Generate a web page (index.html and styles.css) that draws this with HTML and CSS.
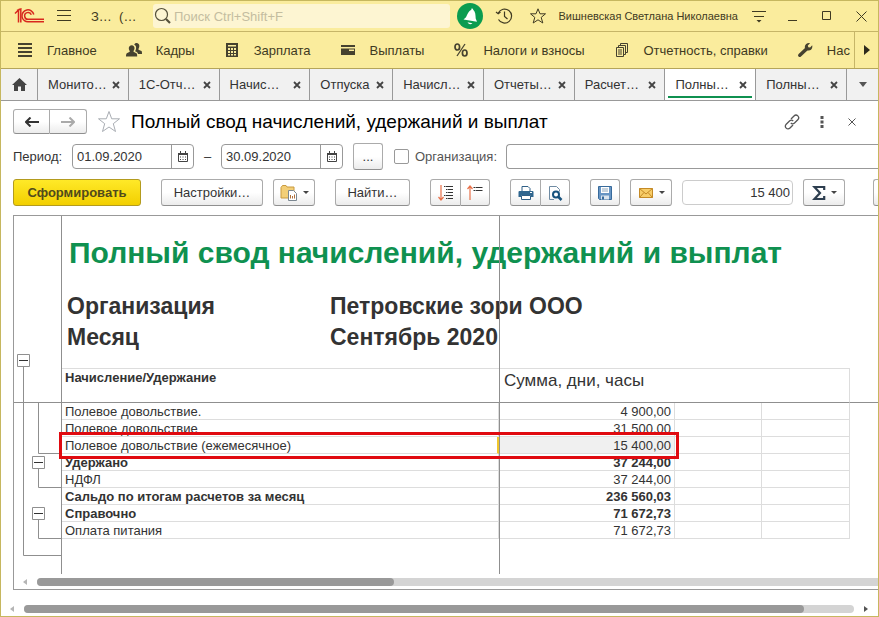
FILE: index.html
```html
<!DOCTYPE html>
<html lang="ru">
<head>
  <meta charset="UTF-8">
  <title>Полный свод начислений, удержаний и выплат</title>
  <link rel="stylesheet" href="styles.css">
</head>
<body>
<div class="window">

  <header class="titlebar">
    <svg class="logo" width="30" height="16" viewBox="0 0 30 16" fill="none" stroke="#d8281e" stroke-width="1.5">
      <path d="M1 5.500L4.500 2V14.500M3 2.500L6.800 1V14.500"/>
      <path d="M19.800 6.500A6 6 0 1 0 14.800 13.800H30"/>
      <path d="M17.300 6.800A3.400 3.400 0 1 0 14.800 11.200H30"/>
    </svg>
    <button class="burger" aria-label="Меню">
      <svg width="15" height="12" viewBox="0 0 15 12" stroke="#3f3a22"><path d="M0 .5H14M0 5.500H14M0 10.500H14"/></svg>
    </button>
    <span class="app-name">З…&nbsp; (…</span>
    <label class="search">
      <svg width="18" height="18" viewBox="0 0 18 18" fill="none" stroke="#55503a" stroke-width="1.200"><circle cx="7.500" cy="7.500" r="6"/><path d="M12 12l4 4" stroke-width="2.200"/></svg>
      <input type="text" placeholder="Поиск Ctrl+Shift+F" aria-label="Поиск">
    </label>
    <button class="top-btn" aria-label="Уведомления">
      <svg width="26" height="26" viewBox="0 0 26 26"><circle cx="13" cy="13" r="13" fill="#0b9c50"/><path d="M14.500 5.500q1.500-.5 1.700 1.300c2.300 2 2.300 5.200 2.500 8.700l1.300 3.300-13.500-2.300 2.500-2.200c1.700-3.300 2.500-6.500 5.300-7.500z" fill="#fff"/><path d="M10.500 19.300l5 .9q-3 2.300-5-.9z" fill="#fff"/></svg>
    </button>
    <button class="top-btn" aria-label="История">
      <svg width="18" height="18" viewBox="0 0 18 18" fill="none" stroke="#3f3a22" stroke-width="1.200"><path d="M3.300 6A7 7 0 1 1 3.500 12.500"/><path d="M1 5l2.200 1.800L5.500 5M9.500 4.500V9.500l3 2.500"/></svg>
    </button>
    <button class="top-btn" aria-label="Избранное">
      <svg width="18" height="18" viewBox="0 0 18 18" fill="none" stroke="#3f3a22"><path d="M9 1.800l2 5h5.500l-4.300 3.600 1.600 5.600L9 12.800 4.200 16l1.600-5.600L1.500 6.800H7z"/></svg>
    </button>
    <span class="user">Вишневская Светлана Николаевна</span>
    <button class="top-btn" aria-label="Сервис">
      <svg width="14" height="14" viewBox="0 0 14 14"><path d="M0 2.500H14M2 7.500H12" stroke="#3f3a22"/><path d="M4.500 11h5L7 13.500z" fill="#3f3a22"/></svg>
    </button>
    <button class="top-btn" aria-label="Свернуть">
      <svg width="10" height="10" viewBox="0 0 10 10"><path d="M0 9.500H9" stroke="#3f3a22"/></svg>
    </button>
    <button class="top-btn" aria-label="Развернуть">
      <svg width="10" height="10" viewBox="0 0 10 10"><path d="M.5.500h8v8h-8z" fill="none" stroke="#3f3a22"/></svg>
    </button>
    <button class="top-btn" aria-label="Закрыть">
      <svg width="11" height="11" viewBox="0 0 11 11"><path d="M.5.500l10 10M10.500.500l-10 10" stroke="#3f3a22"/></svg>
    </button>
  </header>

  <nav class="sections">
    <div class="section-list">
      <a href="#"><svg width="16" height="16" viewBox="0 0 16 16"><path d="M1 2h14M1 6h14M1 10h14M1 14h14" stroke="#46422f" stroke-width="1.800"/></svg>Главное</a>
      <a href="#"><svg width="16" height="16" viewBox="0 0 16 16" fill="#46422f"><path d="M10.500 1a3 3 0 0 1 2.800 3.500c-.2 1.500-1 2-.8 3.200l3 1.300c.5.600.5 2 .5 3h-4c-.3-1.700-2-2.300-3-2.700 1-1.500 1.300-3 1-4.600C9.800 3.500 9 3 8.200 2.700 8.600 1.700 9.500 1 10.500 1z"/><path d="M5.800 3.200C7.500 3.200 8.700 4.500 8.500 6.500c-.2 1.500-1 2.300-1 3.300l3 1.400c.8.700.7 2.800.7 3.300H0c0-.8 0-2.500.8-3.300l3-1.400c0-1-.9-1.800-1-3.300-.2-2 1.200-3.300 3-3.300z"/></svg>Кадры</a>
      <a href="#"><svg width="16" height="16" viewBox="0 0 16 16"><path d="M2 1h12v14H2z" fill="#46422f"/><path d="M4 3h8v1.500H4zM4 6h2v2H4zM7 6h2v2H7zM10 6h2v2h-2zM4 9h2v2H4zM7 9h2v2H7zM10 9h2v2h-2zM4 12h2v1.500H4zM7 12h2v1.500H7zM10 12h2v1.500h-2z" fill="#faec9d"/></svg>Зарплата</a>
      <a href="#"><svg width="16" height="16" viewBox="0 0 16 16"><path d="M1 3h14v2H1zM1 6.500h14V13H1z" fill="#46422f"/><path d="M9 7.500h5v1.500H9z" fill="#faec9d"/></svg>Выплаты</a>
      <a href="#"><svg width="16" height="16" viewBox="0 0 16 16" fill="none" stroke="#46422f" stroke-width="1.700"><ellipse cx="4.300" cy="5" rx="2.300" ry="3"/><ellipse cx="11.700" cy="11" rx="2.300" ry="3"/><path d="M12 2L4 14" stroke-width="1.300"/></svg>Налоги и взносы</a>
      <a href="#"><svg width="16" height="16" viewBox="0 0 16 16" fill="none" stroke="#46422f"><path d="M2.500 5.500h7v9h-7z"/><path d="M4.500 5V3.500h7v9H10M6.500 3V1.500h7v9H12M4 8h4M4 10h4M4 12h4"/></svg>Отчетность, справки</a>
      <a href="#"><svg width="16" height="16" viewBox="0 0 16 16"><path d="M2.800 13.200L9.500 7" stroke="#46422f" stroke-width="3.500" stroke-linecap="round"/><path d="M13 1.200L10.800 3.500l.5 1.700 1.800.3L15.200 3.300c.6 2.500-.7 5-3.200 5.200-2.700.3-4.500-1.500-4.200-3.800C8 2.300 10.500.6 13 1.200z" fill="#46422f"/></svg>Нас</a>
    </div>
    <button class="section-next" aria-label="Далее"><svg width="6" height="10" viewBox="0 0 6 10"><path d="M0 0l6 5-6 5z" fill="#2d2a1c"/></svg></button>
  </nav>

  <div class="tabs">
    <button class="tab-home" aria-label="Начальная страница"><svg width="15" height="13" viewBox="0 0 15 13"><path d="M7.500 0L15 7h-2v6H9V8.500H6V13H2V7H0z" fill="#444"/></svg></button>
    <div class="tab"><a href="#">Монито…</a><button aria-label="Закрыть"><svg width="8" height="8" viewBox="0 0 8 8"><path d="M1 1l6 6M7 1L1 7"/></svg></button></div>
    <div class="tab"><a href="#">1С-Отч…</a><button aria-label="Закрыть"><svg width="8" height="8" viewBox="0 0 8 8"><path d="M1 1l6 6M7 1L1 7"/></svg></button></div>
    <div class="tab"><a href="#">Начис…</a><button aria-label="Закрыть"><svg width="8" height="8" viewBox="0 0 8 8"><path d="M1 1l6 6M7 1L1 7"/></svg></button></div>
    <div class="tab short"><a href="#">Отпуска</a><button aria-label="Закрыть"><svg width="8" height="8" viewBox="0 0 8 8"><path d="M1 1l6 6M7 1L1 7"/></svg></button></div>
    <div class="tab"><a href="#">Начисл…</a><button aria-label="Закрыть"><svg width="8" height="8" viewBox="0 0 8 8"><path d="M1 1l6 6M7 1L1 7"/></svg></button></div>
    <div class="tab"><a href="#">Отчеты…</a><button aria-label="Закрыть"><svg width="8" height="8" viewBox="0 0 8 8"><path d="M1 1l6 6M7 1L1 7"/></svg></button></div>
    <div class="tab"><a href="#">Расчет…</a><button aria-label="Закрыть"><svg width="8" height="8" viewBox="0 0 8 8"><path d="M1 1l6 6M7 1L1 7"/></svg></button></div>
    <div class="tab active"><a href="#">Полны…</a><button aria-label="Закрыть"><svg width="8" height="8" viewBox="0 0 8 8"><path d="M1 1l6 6M7 1L1 7"/></svg></button></div>
    <div class="tab"><a href="#">Полны…</a><button aria-label="Закрыть"><svg width="8" height="8" viewBox="0 0 8 8"><path d="M1 1l6 6M7 1L1 7"/></svg></button></div>
    <button class="tab-more" aria-label="Все вкладки"><svg width="8" height="5" viewBox="0 0 8 5"><path d="M0 0h8L4 5z" fill="#555"/></svg></button>
  </div>

  <main class="page">
    <div class="page-head">
      <div class="btn-group history">
        <button class="btn" aria-label="Назад"><svg width="14" height="10" viewBox="0 0 14 10"><path d="M5.500.500L1 5l4.500 4.500M1 5h13" fill="none" stroke="#333" stroke-width="2"/></svg></button>
        <button class="btn" aria-label="Вперед"><svg width="14" height="10" viewBox="0 0 14 10"><path d="M8.500.500L13 5 8.500 9.500M13 5H0" fill="none" stroke="#aaa" stroke-width="2"/></svg></button>
      </div>
      <button class="icon-btn" aria-label="В избранное"><svg width="24" height="24" viewBox="0 0 24 24"><path d="M12 1.500l2.700 7.300h7.800l-6.200 4.900 2.200 7.800L12 17l-6.500 4.500 2.200-7.800L1.500 8.800h7.800z" fill="#fff" stroke="#a9adb3"/></svg></button>
      <h1>Полный свод начислений, удержаний и выплат</h1>
      <div class="page-tools">
        <button class="icon-btn" aria-label="Ссылка"><svg width="16" height="16" viewBox="0 0 16 16" fill="none" stroke="#555" stroke-width="1.300"><path d="M7 5l3-3c1.300-1.300 2.700-1.200 3.800-.1 1.200 1.200 1.200 2.700 0 3.900L10.500 9c-1.200 1.100-2.700 1.100-3.700 0"/><path d="M9 11l-3 3c-1.300 1.300-2.700 1.200-3.800.1-1.200-1.200-1.200-2.700 0-3.900L5.500 7c1.200-1.100 2.700-1.100 3.700 0"/></svg></button>
        <button class="icon-btn" aria-label="Еще"><svg width="4" height="12" viewBox="0 0 4 12" fill="#555"><path d="M.5 0h3v3h-3zM.5 4.500h3v3h-3zM.5 9h3v3h-3z"/></svg></button>
        <button class="icon-btn" aria-label="Закрыть"><svg width="8" height="8" viewBox="0 0 8 8"><path d="M.5.500l7 7M7.500.500l-7 7" stroke="#555"/></svg></button>
      </div>
    </div>

    <div class="filters">
      <label class="period-label" for="from">Период:</label>
      <div class="date">
        <input type="text" id="from" value="01.09.2020">
        <button aria-label="Выбрать дату"><svg width="10" height="11" viewBox="0 0 10 11"><path d="M.5 2.500h9v8h-9z" fill="none" stroke="#444"/><path d="M0 2h10v2H0zM2 0h1v2H2zM7 0h1v2H7zM2 5.500h1v1H2zM4.500 5.500h1v1h-1zM7 5.500h1v1H7zM2 8h1v1H2zM4.500 8h1v1h-1zM7 8h1v1H7z" fill="#444"/></svg></button>
      </div>
      <span class="dash">–</span>
      <div class="date">
        <input type="text" id="to" value="30.09.2020" aria-label="Конец периода">
        <button aria-label="Выбрать дату"><svg width="10" height="11" viewBox="0 0 10 11"><path d="M.5 2.500h9v8h-9z" fill="none" stroke="#444"/><path d="M0 2h10v2H0zM2 0h1v2H2zM7 0h1v2H7zM2 5.500h1v1H2zM4.500 5.500h1v1h-1zM7 5.500h1v1H7zM2 8h1v1H2zM4.500 8h1v1h-1zM7 8h1v1H7z" fill="#444"/></svg></button>
      </div>
      <button class="btn square dots">...</button>
      <input type="checkbox" class="check" id="org-on">
      <label class="org-label" for="org-on">Организация:</label>
      <input type="text" class="org-field" aria-label="Организация">
    </div>

    <div class="toolbar">
      <button class="btn primary">Сформировать</button>
      <button class="btn settings">Настройки…</button>
      <button class="btn drop near" aria-label="Варианты">
        <svg width="18" height="18" viewBox="0 0 18 18"><path d="M1 3.500L2.500 1.500H6l1 1.500h7v11H1z" fill="#f3cf78" stroke="#c99a3e"/><path d="M8.500 6.500h5l3 3v7h-8z" fill="#fff" stroke="#7b8791"/><path d="M10.500 11v3.500M12.500 12v2.500M14.500 10.500v4" stroke="#b0703a"/></svg>
        <svg class="caret" width="6" height="3" viewBox="0 0 6 3"><path d="M0 0h6L3 3z" fill="#444"/></svg>
      </button>
      <button class="btn find">Найти…</button>
      <div class="btn-group">
        <button class="btn" aria-label="Развернуть группы"><svg width="16" height="16" viewBox="0 0 16 16"><path d="M3 0v15M.5 12L3 15l2.500-3" fill="none" stroke="#e8714a" stroke-width="1.200"/><path d="M6 1.500h9M8 4.500h7M8 7.500h7M6 10.500h9M8 13.500h7" stroke="#333" stroke-width="1.200" stroke-dasharray="1.500 .5 9"/></svg></button>
        <button class="btn" aria-label="Свернуть группы"><svg width="16" height="16" viewBox="0 0 16 16"><path d="M3 15V1M.5 4L3 1l2.500 3" fill="none" stroke="#e8714a" stroke-width="1.200"/><path d="M6.500 2.500h9M6.500 5.500h9" stroke="#333" stroke-width="1.200" stroke-dasharray="1.500 .5 9"/></svg></button>
      </div>
      <div class="btn-group">
        <button class="btn" aria-label="Печать"><svg width="16" height="16" viewBox="0 0 16 16"><path d="M4 1.500h6l2 2V7H4z" fill="#fff" stroke="#2f5f86"/><path d="M1.500 6h13q1 0 1 1v5h-3v-2h-9v2h-3V7q0-1 1-1z" fill="#2f668f"/><path d="M3.500 10.500h9v4h-9z" fill="#fff" stroke="#2f5f86"/><path d="M12 7.500h2" stroke="#fff"/></svg></button>
        <button class="btn" aria-label="Предварительный просмотр"><svg width="16" height="16" viewBox="0 0 16 16"><path d="M2.500 14.500v-13h7l3 3v2M2.500 14.500H7" fill="none" stroke="#6f8ba3"/><circle cx="9" cy="9.500" r="3" fill="#fff" stroke="#17527d" stroke-width="2"/><path d="M11 11.500l3.500 3.500" stroke="#17527d" stroke-width="2.500"/></svg></button>
      </div>
      <button class="btn square" aria-label="Сохранить"><svg width="16" height="16" viewBox="0 0 16 16"><path d="M1.500 1.500h13v13h-12l-1-1z" fill="#6795c4" stroke="#376a9b"/><path d="M4 2h8v6H4z" fill="#fff"/><path d="M5 4h6M5 6h6" stroke="#8ba5bb"/><path d="M4 10.500h8v4H4z" fill="#dbe5ee"/><path d="M5 11.500h2v3H5z" fill="#376a9b"/></svg></button>
      <button class="btn drop near" aria-label="Отправить">
        <svg width="16" height="16" viewBox="0 0 16 16"><path d="M1.500 3.500h13v9h-13z" fill="#f8cd68" stroke="#c48a26"/><path d="M1.500 3.500L8 9l6.500-5.500M1.500 12.500L6 7.500M14.500 12.500L10 7.500" fill="none" stroke="#c48a26"/></svg>
        <svg class="caret" width="6" height="3" viewBox="0 0 6 3"><path d="M0 0h6L3 3z" fill="#444"/></svg>
      </button>
      <input type="text" class="total near" value="15 400" aria-label="Сумма выделенных ячеек" readonly>
      <button class="btn drop near" aria-label="Сумма">
        <svg width="14" height="16" viewBox="0 0 14 16"><path d="M12.200 5V2H2.500L8 8l-5.500 6h9.700v-3" fill="none" stroke="#2d3e4f" stroke-width="2.200"/></svg>
        <svg class="caret" width="6" height="3" viewBox="0 0 6 3"><path d="M0 0h6L3 3z" fill="#444"/></svg>
      </button>
      <button class="btn more" aria-label="Еще"></button>
    </div>

    <section class="sheet">
      <div class="sheet-body">
        <svg class="groups" width="47" height="358" viewBox="0 0 47 358" fill="none" stroke="#8f8f8f">
          <path d="M0 186.500H47M9.500 151V339.500H47M24.500 187V237.500H47M24.500 253V271.500H47M24.500 304V322.500H47"/>
          <g fill="#fff"><path d="M3.500 138.500h12v12h-12zM18.500 240.500h12v12h-12zM18.500 291.500h12v12h-12z"/></g>
          <path d="M5 144.500h9M20 246.500h9M20 297.500h9" stroke="#333"/>
        </svg>
        <div class="report">
          <h2>Полный свод начислений, удержаний и выплат</h2>
          <dl class="params">
            <dt>Организация</dt><dd>Петровские зори ООО</dd>
            <dt>Месяц</dt><dd>Сентябрь 2020</dd>
          </dl>
          <table>
            <colgroup><col class="c-name"><col class="c-sum"><col class="c-days"><col class="c-hours"><col></colgroup>
            <thead>
              <tr><th>Начисление/Удержание</th><th colspan="3" class="sum-head">Сумма, дни, часы</th><th class="rest"></th></tr>
            </thead>
            <tbody>
              <tr><td>Полевое довольствие.</td><td>4 900,00</td><td></td><td></td></tr>
              <tr><td>Полевое довольствие</td><td>31 500,00</td><td></td><td></td></tr>
              <tr class="marked"><td>Полевое довольствие (ежемесячное)<span class="frame"></span></td><td>15 400,00</td><td></td><td></td></tr>
              <tr class="bold"><td>Удержано</td><td>37 244,00</td><td></td><td></td></tr>
              <tr><td>НДФЛ</td><td>37 244,00</td><td></td><td></td></tr>
              <tr class="bold"><td>Сальдо по итогам расчетов за месяц</td><td>236 560,03</td><td></td><td></td></tr>
              <tr class="bold"><td>Справочно</td><td>71 672,73</td><td></td><td></td></tr>
              <tr><td>Оплата питания</td><td>71 672,73</td><td></td><td></td></tr>
            </tbody>
          </table>
          <span class="freeze"></span>
        </div>
      </div>
      <div class="scroll inner">
        <svg width="4" height="6" viewBox="0 0 4 6"><path d="M4 0v6L0 3z" fill="#b5b5b5"/></svg>
        <div class="track"><div class="thumb"></div></div>
      </div>
    </section>
  </main>

  <div class="scroll outer">
    <svg width="4" height="6" viewBox="0 0 4 6"><path d="M4 0v6L0 3z" fill="#b5b5b5"/></svg>
    <div class="track"><div class="thumb"></div></div>
    <svg width="4" height="6" viewBox="0 0 4 6"><path d="M0 0v6l4-3z" fill="#555"/></svg>
  </div>

</div>
</body>
</html>
```
FILE: styles.css
```css
* {
  box-sizing: border-box;
}
body {
  margin: 0;
  font-family: "Liberation Sans", Arial, sans-serif;
  font-size: 13px;
  color: #333;
  background: #fff;
}
button, input {
  font: inherit;
  color: inherit;
  margin: 0;
  padding: 0;
}
button {
  border: 0;
  background: none;
  display: flex;
  align-items: center;
  justify-content: center;
}
a {
  color: inherit;
  text-decoration: none;
}
svg {
  display: block;
  flex: none;
}
.window {
  min-height: 100vh;
  display: flex;
  flex-direction: column;
  border: 1px solid #c6b75f;
  overflow: hidden;
}

/* title bar */
.titlebar {
  height: 31px;
  display: flex;
  align-items: center;
  background: #faec9d;
  border-bottom: 1px solid #c6b568;
  color: #3f3a22;
  padding-left: 13px;
}
.burger {
  margin: 0 19px 0 13px;
}
.app-name {
  width: 62px;
  white-space: nowrap;
}
.search {
  flex: 1;
  height: 24px;
  display: flex;
  align-items: center;
  gap: 2px;
  padding-left: 1px;
  background: #fdf5d2;
  border-radius: 3px;
}
.search input {
  flex: 1;
  min-width: 0;
  border: 0;
  background: none;
}
.search input::placeholder {
  color: #c4bda0;
  opacity: 1;
}
.search + .top-btn {
  margin-left: 3px;
}
.top-btn {
  width: 34px;
  height: 30px;
}
.user {
  font-size: 11px;
  margin: 0 4px;
  white-space: nowrap;
}

/* sections */
.sections {
  height: 37px;
  display: flex;
  background: #faec9d;
  border-bottom: 1px solid #b5a55a;
  color: #3f3a22;
}
.section-list {
  flex: 1;
  min-width: 0;
  display: flex;
  gap: 29px;
  padding-left: 16px;
  overflow: hidden;
}
.section-list a {
  display: flex;
  align-items: center;
  gap: 14px;
  white-space: nowrap;
}
.section-next {
  width: 24px;
  border-left: 1px solid #c6b568;
}

/* open windows */
.tabs {
  height: 32px;
  display: flex;
  background: #f1f1f1;
  border-bottom: 1px solid #999;
}
.tab-home {
  flex: none;
  width: 37px;
  border-right: 1px solid #999;
}
.tab {
  flex: 1 0 72px;
  display: flex;
  align-items: center;
  justify-content: space-between;
  padding: 0 8px 0 10px;
  border-right: 1px solid #999;
  white-space: nowrap;
}
.tab.short {
  flex-basis: 64px;
}
.tab svg {
  stroke: #444;
  stroke-width: 1.8;
}
.tab.active {
  background: linear-gradient(#0f9150, #0f9150) 3px 27px / calc(100% - 6px) 2px no-repeat #fff;
}
.tab-more {
  flex: none;
  width: 31px;
}

/* form */
.page {
  flex: 1;
  display: flex;
  flex-direction: column;
  padding: 8px 0 0 12px;
}
.page-head {
  height: 25px;
  display: flex;
  align-items: center;
  gap: 10px;
}
.page-head h1 {
  margin: 0;
  font-size: 19px;
  font-weight: normal;
  color: #000;
  white-space: nowrap;
}
.page-tools {
  display: flex;
  margin-left: auto;
  padding-right: 11px;
}
.page-tools .icon-btn {
  width: 30px;
}
.btn {
  flex: none;
  height: 27px;
  border: 1px solid #ababab;
  border-bottom-color: #8f8f8f;
  border-radius: 3px;
  background: linear-gradient(#fff 50%, #ececec);
}
.btn-group {
  display: flex;
}
.btn-group .btn {
  width: 29px;
}
.btn-group .btn:first-child {
  width: 31px;
  border-radius: 3px 0 0 3px;
}
.btn-group .btn:last-child {
  border-left: 0;
  border-radius: 0 3px 3px 0;
}
.btn-group.history .btn {
  width: 37px;
  height: 25px;
}
.square {
  width: 30px;
}

.filters {
  display: flex;
  align-items: center;
  margin-top: 9px;
  height: 27px;
}
.period-label {
  width: 59px;
}
.date {
  width: 122px;
  height: 25px;
  display: flex;
  border: 1px solid #999;
  border-radius: 4px;
}
.date input {
  flex: 1;
  min-width: 0;
  border: 0;
  background: none;
  padding-left: 4px;
  outline: 0;
}
.date button {
  width: 22px;
  border-left: 1px solid #999;
}
.dash {
  width: 27px;
  text-align: center;
}
.dots {
  margin: 0 11px 0 10px;
}
.check {
  appearance: none;
  width: 15px;
  height: 15px;
  border: 1px solid #999;
  border-radius: 2px;
}
.org-label {
  width: 91px;
  margin-left: 6px;
  color: #555;
}
.org-field {
  flex: 1;
  min-width: 0;
  height: 25px;
  border: 1px solid #999;
  border-right: 0;
  border-radius: 4px 0 0 4px;
}

.toolbar {
  display: flex;
  align-items: center;
  gap: 20px;
  margin-top: 9px;
}
.toolbar .near {
  margin-left: -10px;
}
.primary {
  width: 128px;
  font-weight: bold;
  color: #514a1c;
  background: linear-gradient(#ffe928, #f2cf00);
  border-color: #b39b1e;
}
.settings {
  width: 102px;
}
.find {
  width: 75px;
}
.drop {
  width: 42px;
  gap: 5px;
}
.total {
  width: 111px;
  height: 25px;
  border: 1px solid #ccc;
  border-radius: 4px;
  text-align: right;
  padding-right: 2px;
}
.more {
  flex: 1;
  margin-left: 8px;
  border-right: 0;
  border-radius: 3px 0 0 3px;
}

/* spreadsheet */
.sheet {
  flex: 1;
  display: flex;
  flex-direction: column;
  margin-top: 9px;
  border: 1px solid #999;
  border-right: 0;
}
.sheet-body {
  flex: 1;
  display: flex;
}
.report {
  flex: 1;
  min-width: 0;
  position: relative;
  border-left: 1px solid #8f8f8f;
}
.report h2 {
  margin: 0;
  padding: 19px 0 0 7px;
  font-size: 30px;
  line-height: 36px;
  color: #0f9150;
  white-space: nowrap;
}
.params {
  display: grid;
  grid-template-columns: 263px 1fr;
  margin: 0;
  padding: 20px 0 15px 5px;
  font-size: 23px;
  line-height: 31px;
  font-weight: bold;
}
.params dd {
  margin: 0;
}
table {
  width: 100%;
  table-layout: fixed;
  border-collapse: separate;
  border-spacing: 0;
}
.c-name {
  width: 437px;
}
.c-sum {
  width: 176px;
}
.c-days {
  width: 87px;
}
.c-hours {
  width: 88px;
}
th {
  height: 35px;
  padding: 1px 3px;
  text-align: left;
  vertical-align: top;
  border-top: 1px solid #ddd;
  border-bottom: 1px solid #8f8f8f;
}
.sum-head {
  padding: 2px 5px;
  font-size: 17px;
  font-weight: normal;
  border-right: 1px solid #ddd;
}
.rest {
  border-top: 0;
}
td {
  height: 17px;
  line-height: 14px;
  padding: 2px 3px 0;
  border-bottom: 1px solid #ddd;
  border-right: 1px solid #ddd;
  white-space: nowrap;
}
td:nth-child(2) {
  text-align: right;
}
.bold td {
  font-weight: bold;
}
.marked {
  position: relative;
}
.marked td:first-child {
  border-right: 2px solid #f0c62c;
}
.marked td:nth-child(2) {
  background: #f0f0f0;
}
.frame {
  position: absolute;
  z-index: 2;
  top: -5px;
  left: -3px;
  width: 620px;
  height: 27px;
  border: 3px solid #e00a10;
}
.freeze {
  position: absolute;
  top: 0;
  bottom: 0;
  left: 437px;
  border-left: 1px solid #8f8f8f;
}

/* scroll bars */
.scroll {
  display: flex;
  align-items: center;
  gap: 10px;
}
.scroll .track {
  flex: 1;
  height: 8px;
  background: #d4d4d4;
  border-radius: 4px;
}
.scroll .thumb {
  height: 8px;
  background: #999;
  border-radius: 4px;
}
.inner {
  height: 15px;
  padding-left: 9px;
}
.inner .track {
  border-radius: 4px 0 0 4px;
}
.inner .thumb {
  width: 42.5%;
}
.outer {
  height: 26px;
  padding: 11px 10px 0 9px;
}
.outer .thumb {
  width: 94%;
}
```
